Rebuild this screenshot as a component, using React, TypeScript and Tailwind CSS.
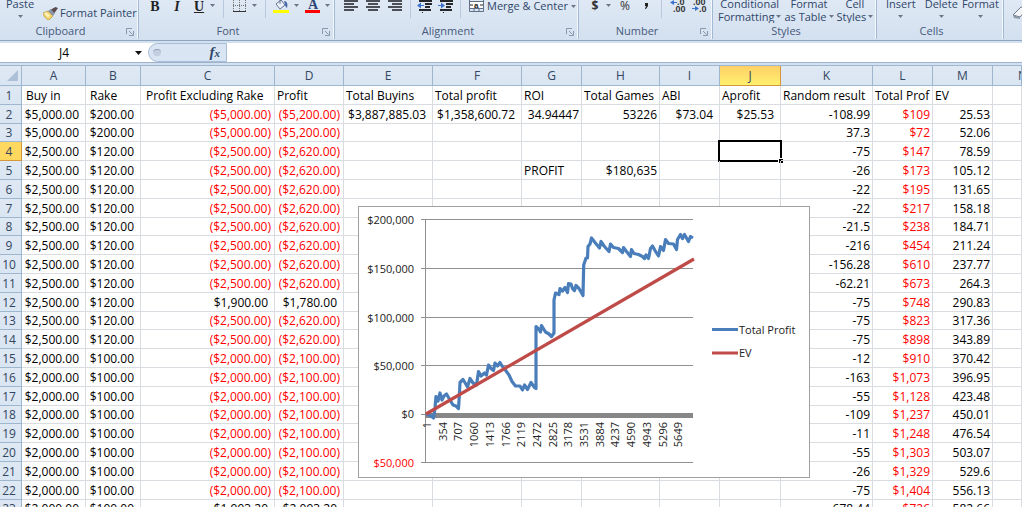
import React from "react";

type Col = { id: string; width: string; pad: string };

const COLS: Col[] = [
  { id: "A", width: "w-[64px]", pad: "pl-[4px]" },
  { id: "B", width: "w-[55px]", pad: "pl-[4px]" },
  { id: "C", width: "w-[134px]", pad: "pl-[5px]" },
  { id: "D", width: "w-[69px]", pad: "pl-[2px]" },
  { id: "E", width: "w-[89px]", pad: "pl-[2px]" },
  { id: "F", width: "w-[89px]", pad: "pl-[2px]" },
  { id: "G", width: "w-[60px]", pad: "pl-[2px]" },
  { id: "H", width: "w-[78px]", pad: "pl-[2px]" },
  { id: "I", width: "w-[60px]", pad: "pl-[2px]" },
  { id: "J", width: "w-[61px]", pad: "pl-[2px]" },
  { id: "K", width: "w-[92px]", pad: "pl-[2px]" },
  { id: "L", width: "w-[60px]", pad: "pl-[2px]" },
  { id: "M", width: "w-[60px]", pad: "pl-[2px]" },
];

const E = "";
const ROWS: string[][] = [
  ["Buy in", "Rake", "Profit Excluding Rake", "Profit", "Total Buyins", "Total profit", "ROI", "Total Games", "ABI", "Aprofit", "Random result", "Total Prof", "EV"],
  ["$5,000.00", "$200.00", "($5,000.00)", "($5,200.00)", "$3,887,885.03", "$1,358,600.72", "34.94447", "53226", "$73.04", "$25.53", "-108.99", "$109", "25.53"],
  ["$5,000.00", "$200.00", "($5,000.00)", "($5,200.00)", E, E, E, E, E, E, "37.3", "$72", "52.06"],
  ["$2,500.00", "$120.00", "($2,500.00)", "($2,620.00)", E, E, E, E, E, E, "-75", "$147", "78.59"],
  ["$2,500.00", "$120.00", "($2,500.00)", "($2,620.00)", E, E, "PROFIT", "$180,635", E, E, "-26", "$173", "105.12"],
  ["$2,500.00", "$120.00", "($2,500.00)", "($2,620.00)", E, E, E, E, E, E, "-22", "$195", "131.65"],
  ["$2,500.00", "$120.00", "($2,500.00)", "($2,620.00)", E, E, E, E, E, E, "-22", "$217", "158.18"],
  ["$2,500.00", "$120.00", "($2,500.00)", "($2,620.00)", E, E, E, E, E, E, "-21.5", "$238", "184.71"],
  ["$2,500.00", "$120.00", "($2,500.00)", "($2,620.00)", E, E, E, E, E, E, "-216", "$454", "211.24"],
  ["$2,500.00", "$120.00", "($2,500.00)", "($2,620.00)", E, E, E, E, E, E, "-156.28", "$610", "237.77"],
  ["$2,500.00", "$120.00", "($2,500.00)", "($2,620.00)", E, E, E, E, E, E, "-62.21", "$673", "264.3"],
  ["$2,500.00", "$120.00", "$1,900.00", "$1,780.00", E, E, E, E, E, E, "-75", "$748", "290.83"],
  ["$2,500.00", "$120.00", "($2,500.00)", "($2,620.00)", E, E, E, E, E, E, "-75", "$823", "317.36"],
  ["$2,500.00", "$120.00", "($2,500.00)", "($2,620.00)", E, E, E, E, E, E, "-75", "$898", "343.89"],
  ["$2,000.00", "$100.00", "($2,000.00)", "($2,100.00)", E, E, E, E, E, E, "-12", "$910", "370.42"],
  ["$2,000.00", "$100.00", "($2,000.00)", "($2,100.00)", E, E, E, E, E, E, "-163", "$1,073", "396.95"],
  ["$2,000.00", "$100.00", "($2,000.00)", "($2,100.00)", E, E, E, E, E, E, "-55", "$1,128", "423.48"],
  ["$2,000.00", "$100.00", "($2,000.00)", "($2,100.00)", E, E, E, E, E, E, "-109", "$1,237", "450.01"],
  ["$2,000.00", "$100.00", "($2,000.00)", "($2,100.00)", E, E, E, E, E, E, "-11", "$1,248", "476.54"],
  ["$2,000.00", "$100.00", "($2,000.00)", "($2,100.00)", E, E, E, E, E, E, "-55", "$1,303", "503.07"],
  ["$2,000.00", "$100.00", "($2,000.00)", "($2,100.00)", E, E, E, E, E, E, "-26", "$1,329", "529.6"],
  ["$2,000.00", "$100.00", "($2,000.00)", "($2,100.00)", E, E, E, E, E, E, "-75", "$1,404", "556.13"],
  ["$2,000.00", "$100.00", "$1,993.20", "$2,093.20", E, E, E, E, E, E, "678.44", "$726", "582.66"],
];

function cellClass(text: string, row: number, col: number): string {
  if (row === 0 || text === "PROFIT") return `${COLS[col].pad} text-left text-black`;
  const negative = text.startsWith("(");
  const red = negative || col === 11;
  const wide = text.includes(".") && text.startsWith("$");
  const pad = wide ? "pr-[6px]" : negative ? "pr-[3px]" : "pr-[2px]";
  return `text-right ${pad} ${red ? "text-[#ff0000]" : "text-black"}`;
}

function Caret() {
  return (
    <svg width="5" height="3" viewBox="0 0 5 3" className="shrink-0" aria-hidden="true">
      <path d="M0 0h5L2.5 3z" fill="#6b7788" />
    </svg>
  );
}

function Launcher({ label }: { label: string }) {
  return (
    <button type="button" aria-label={label} className="absolute right-[4px] bottom-[3px]">
      <svg width="8" height="8" viewBox="0 0 8 8" fill="none" stroke="#8b98ab" aria-hidden="true">
        <path d="M.5 6V.5H6" />
        <path d="M3 3l3.500 3.500M7.500 3v4.500H3" />
      </svg>
    </button>
  );
}

function Group({ label, width, launcher, children }: { label: string; width: string; launcher?: boolean; children: React.ReactNode }) {
  return (
    <section
      aria-label={label}
      className={`${width} relative flex h-[39px] shrink-0 flex-col border-r border-[#a3b8d3] shadow-[inset_-1px_0_0_#f3f8fd]`}
    >
      <div className="flex h-[23px] items-end overflow-hidden">{children}</div>
      <div className="h-[16px] pr-[17px] text-center leading-[16px] text-[#46597a]">{label}</div>
      {launcher && <Launcher label={`${label} settings`} />}
    </section>
  );
}

function StackButton({ top, bottom, className }: { top: string; bottom?: string; className: string }) {
  return (
    <button type="button" className={`${className} flex shrink-0 flex-col items-center leading-[12px] text-[#2f4668]`}>
      <span>{top}</span>
      <span className="flex h-[13px] items-center gap-[2px] whitespace-nowrap">
        {bottom}
        <Caret />
      </span>
    </button>
  );
}

function Divider() {
  return <span className="block h-[18px] w-px bg-[#b9c9dd]" />;
}

function AlignIcon({ rows }: { rows: [number, number][] }) {
  return (
    <svg width="14" height="12" viewBox="0 0 14 12" aria-hidden="true">
      {rows.map(([x, w], i) => (
        <rect key={i} x={x} y={i * 3} width={w} height="2" fill="#4c4f55" />
      ))}
    </svg>
  );
}

function IndentIcon({ flip }: { flip?: boolean }) {
  return (
    <svg width="16" height="13" viewBox="0 0 16 13" aria-hidden="true">
      <path d="M2 1h13M8 4h7M8 7h5M2 10h12" stroke="#26282c" strokeWidth="2" />
      <path d="M5.500 12v1" stroke="#26282c" strokeWidth="1" />
      <path d={flip ? "M0 5h3V2.500L7 5.500 3 8.500V6H0z" : "M7 5H4V2.500L0 5.500 4 8.500V6h3z"} fill="#3d73c9" />
    </svg>
  );
}

function DecimalIcon({ more }: { more?: boolean }) {
  return (
    <svg width="16" height="13" viewBox="0 0 16 13" aria-hidden="true" fontFamily="Liberation Sans, sans-serif" fontSize="9" fontWeight="700" fill="#333">
      <text x={more ? "7" : "2"} y="5">{more ? ".0" : ".00"}</text>
      <text x={more ? "3" : "8"} y="12">{more ? ".00" : ".0"}</text>
      <path d={more ? "M7 2H4V0L0 2.500 4 5V3h3z" : "M1 8h3V6l4 2.500L4 11V9H1z"} fill="#3d73c9" />
    </svg>
  );
}

function Ribbon() {
  return (
    <header className="flex h-[41px] overflow-hidden border-b border-[#8ea5c2] bg-gradient-to-b from-[#dfe9f5] to-[#d3e0ef] text-[11px]">
      <Group label="Clipboard" width="w-[139px]" launcher>
        <StackButton top="Paste" className="ml-[6px]" />
        <button type="button" className="mb-[3px] ml-[9px] flex items-center gap-[2px] leading-[14px] whitespace-nowrap text-[#2f4668]">
          <svg width="15" height="13" viewBox="0 0 15 13" aria-hidden="true">
            <path d="M0 6l5-2 5 5-4 4c-2 0-5-3-6-7z" fill="#f2d36b" stroke="#b8923a" strokeWidth=".7" />
            <path d="M1 6.500l4 4 2-2-4-3.500z" fill="#fff3b8" />
            <path d="M5 4l3-2 4 4-2 3z" fill="#8894a8" />
            <path d="M8 2.500L12.500 0 15 1l-3.500 5z" fill="#5b4a4a" />
          </svg>
          Format Painter
        </button>
      </Group>
      <Group label="Font" width="w-[196px]" launcher>
        <div className="flex h-[23px] items-start pl-[10px] font-['Liberation_Serif',serif] text-[14px] font-bold leading-[13px] text-[#222]">
          <button type="button" className="w-[12px]">B</button>
          <button type="button" className="ml-[10px] w-[12px] italic">I</button>
          <button type="button" className="ml-[10px] w-[12px] underline">U</button>
          <span className="mt-[4px] ml-[5px] flex"><Caret /></span>
          <span className="ml-[8px]"><Divider /></span>
          <button type="button" aria-label="Borders" className="ml-[9px] flex">
            <svg width="13" height="12" viewBox="0 0 13 12" aria-hidden="true">
              <path d="M.5 0v11M12.500 0v11M6.500 0v11M0 5.500h13" stroke="#777" strokeDasharray="1 1" />
              <path d="M0 11.500h13" stroke="#333" />
            </svg>
          </button>
          <span className="mt-[4px] ml-[6px] flex"><Caret /></span>
          <span className="ml-[8px]"><Divider /></span>
          <button type="button" aria-label="Fill color" className="ml-[7px] flex">
            <svg width="17" height="13" viewBox="0 0 17 13" aria-hidden="true">
              <path d="M3 4l5-4 4 5-5 4z" fill="#eef3fa" stroke="#5f7391" />
              <path d="M7 0v4" stroke="#5f7391" />
              <path d="M11 1c3 0 4 3 3 7-1-1-2-2-2-4z" fill="#4168a6" />
              <path d="M0 10h16v3H0z" fill="#ff0" />
            </svg>
          </button>
          <span className="mt-[4px] ml-[4px] flex"><Caret /></span>
          <button type="button" aria-label="Font color" className="ml-[6px] flex">
            <svg width="16" height="13" viewBox="0 0 16 13" aria-hidden="true">
              <text x="3" y="9" fontFamily="Liberation Serif, serif" fontSize="14" fontWeight="700" fill="#2c4674">A</text>
              <path d="M0 10h15v3H0z" fill="#f00" />
            </svg>
          </button>
          <span className="mt-[4px] ml-[4px] flex"><Caret /></span>
        </div>
      </Group>
      <Group label="Alignment" width="w-[244px]" launcher>
        <div className="flex h-[23px] items-start pl-[9px]">
          <button type="button" aria-label="Align left"><AlignIcon rows={[[0, 14], [0, 10], [0, 14], [0, 10]]} /></button>
          <button type="button" aria-label="Center" className="ml-[8px]"><AlignIcon rows={[[0, 14], [2, 10], [0, 14], [2, 10]]} /></button>
          <button type="button" aria-label="Align right" className="ml-[8px]"><AlignIcon rows={[[0, 14], [4, 10], [0, 14], [4, 10]]} /></button>
          <span className="ml-[8px]"><Divider /></span>
          <button type="button" aria-label="Decrease indent" className="ml-[6px]"><IndentIcon /></button>
          <button type="button" aria-label="Increase indent" className="ml-[5px]"><IndentIcon flip /></button>
          <span className="ml-[6px]"><Divider /></span>
          <button type="button" className="ml-[8px] flex items-center gap-[3px] leading-[12px] whitespace-nowrap text-[#2f4668]">
            <svg width="15" height="12" viewBox="0 0 15 12" aria-hidden="true">
              <path d="M.5 0v11.500h14V0M.5 8.500h14M5 8.500v3M10 8.500v3M.5 1.500h14" fill="none" stroke="#5f7088" />
              <path d="M1 2h13v6H1z" fill="#fff" />
              <path d="M1 5h3M11 5h3" stroke="#222" />
              <text x="5" y="8" fontFamily="Liberation Sans, sans-serif" fontSize="8" fontWeight="700" fill="#222">a</text>
            </svg>
            Merge &amp; Center
            <Caret />
          </button>
        </div>
      </Group>
      <Group label="Number" width="w-[134px]" launcher>
        <div className="flex h-[23px] items-start pl-[12px] font-bold leading-[12px] text-[#333]">
          <button type="button" className="w-[8px] text-[12px]">$</button>
          <span className="mt-[4px] ml-[7px] flex"><Caret /></span>
          <button type="button" className="ml-[8px] w-[12px] text-[12px] font-normal">%</button>
          <button type="button" aria-label="Comma style" className="ml-[13px] flex pt-[3px]">
            <svg width="5" height="7" viewBox="0 0 5 7" aria-hidden="true"><path d="M1 0h3v3L2 6H1l1-3H1z" fill="#222" /></svg>
          </button>
          <span className="ml-[12px]"><Divider /></span>
          <button type="button" aria-label="Increase decimal" className="ml-[8px]"><DecimalIcon more /></button>
          <button type="button" aria-label="Decrease decimal" className="ml-[5px]"><DecimalIcon /></button>
        </div>
      </Group>
      <Group label="Styles" width="w-[164px]">
        <StackButton top="Conditional" bottom="Formatting" className="ml-[5px]" />
        <StackButton top="Format" bottom="as Table" className="ml-[3px]" />
        <StackButton top="Cell" bottom="Styles" className="ml-[3px]" />
      </Group>
      <Group label="Cells" width="w-[127px]">
        <StackButton top="Insert" className="ml-[9px]" />
        <StackButton top="Delete" className="ml-[9px]" />
        <StackButton top="Format" className="ml-[4px]" />
      </Group>
      <div className="flex items-start pt-[6px] pl-[9px]">
        <button type="button" aria-label="Clear">
          <svg width="16" height="14" viewBox="0 0 16 14" aria-hidden="true">
            <path d="M0 9l8-8 7 1-8 9z" fill="#f5f6f8" stroke="#6f7a8a" />
            <path d="M0 9l7 2v2l-6-1z" fill="#8d98a8" />
          </svg>
        </button>
      </div>
    </header>
  );
}

function FormulaBar() {
  return (
    <div className="mt-[2px] flex h-[20px] border-b border-[#9fb3ce] bg-white text-[12px]">
      <input aria-label="Name box" defaultValue="J4" className="w-[128px] bg-white text-center text-black outline-none" />
      <button type="button" aria-label="Open name list" className="flex w-[20px] items-center justify-center">
        <svg width="7" height="4" viewBox="0 0 7 4" aria-hidden="true"><path d="M0 0h7L3.500 4z" fill="#111" /></svg>
      </button>
      <div className="flex w-[79px] items-center justify-between rounded-l-full border border-[#a9bdd6] bg-[#d9e5f3] pr-[6px] pl-[4px]">
        <span className="h-[7px] w-[8px] rounded-full border-t border-[#8fa0b8] bg-[#c3cfdf]" />
        <button type="button" className="font-['Liberation_Serif',serif] text-[15px] font-bold italic leading-[16px] text-[#2f4668]">
          f<span className="text-[11px]">x</span>
        </button>
      </div>
      <input aria-label="Formula" className="min-w-0 flex-1 bg-white px-1 outline-none" />
    </div>
  );
}

const LINE =
  "426,414 429,415 431,416 433.500,418 435,408 436,396.500 438,401 440,393 442,400 444,396 446.500,394 450,400 453,405 456,406 458.500,408.500 459.500,393 460,382.500 463,379.500 465.500,383.500 467.500,387 470,378.500 473,383 476.500,385 478.500,371.500 481,376 484.500,373 486.500,375 488.500,365 491,368.500 493.500,370.500 495,363 497.500,366 500,362.500 502,366 505,369.500 509,375 512,381.500 515.500,386 520,386 522.500,390 524.500,385 527.500,389.500 531,382.500 534.500,387.500 536,388.500 536,326.500 539,329.500 540.500,332 541.500,325.500 545.500,332 549,334 551.500,336.500 554,333 554,300 555.500,293 559,294.500 560,288.500 562.500,291 565,287.500 567.500,292.500 568.500,283.500 571,284 572.500,288.500 574.500,290.500 576,285.500 579,288.500 583,295.500 583.700,265 586,258 587.500,258 588,246.500 590,244 591.500,238 595,242.500 599.500,248 601,241.500 604,246 609,251.500 610.500,244 613.500,247.500 618.500,248.500 622.500,252.500 623.500,247.500 626.500,251.500 630.500,256.500 631.500,249.500 634,253.500 638.500,254.500 642.500,256.500 644.500,258.500 646,255 648.500,258.500 650.500,248.500 652.500,246 655,250.500 658.500,256 660.500,246.500 663.500,250.500 665.500,239.500 668.500,243.500 673.500,244 676.500,249.500 677.500,239.500 680.500,234.500 682.500,238.500 684.500,234.500 686.500,238 688.500,241.500 690.500,236.500 693,238";

const Y_TICKS: [string, number][] = [
  ["$200,000", 219.5],
  ["$150,000", 268.5],
  ["$100,000", 317.5],
  ["$50,000", 365.5],
  ["$0", 414],
  ["$50,000", 462.5],
];

const X_TICKS = ["1", "354", "707", "1060", "1413", "1766", "2119", "2472", "2825", "3178", "3531", "3884", "4237", "4590", "4943", "5296", "5649"];

function Chart() {
  return (
    <figure className="absolute top-[140px] left-[358px] border border-[#a0a0a0] bg-white">
      <svg width="450" height="270" viewBox="359 207 450 270" fontFamily="'Open Sans', sans-serif" fontSize="11" fill="#222" role="img" aria-label="Total Profit and EV">
        {Y_TICKS.map(([label, y], i) => (
          <g key={i}>
            {i !== 4 && <path d={`M421 ${y}H693`} stroke="#909090" />}
            <text x="414" y={y + 4} textAnchor="end" fill={i === 5 ? "#ff0000" : "#222"}>{label}</text>
          </g>
        ))}
        <path d="M425.500 219v244M421 414.500h4" stroke="#909090" />
        <path d="M425 415.500H693" stroke="#878787" strokeWidth="5" />
        <polyline points={LINE} fill="none" stroke="#4a7ebb" strokeWidth="3.200" strokeLinejoin="round" />
        <path d="M426 414L694 259" stroke="#be4b48" strokeWidth="3.200" />
        {X_TICKS.map((label, i) => (
          <text key={label} textAnchor="end" transform={`translate(${431 + i * 15.7} 422) rotate(-90)`}>{label}</text>
        ))}
        <path d="M712 329.500h26" stroke="#4a7ebb" strokeWidth="3" />
        <text x="739" y="334">Total Profit</text>
        <path d="M712 353h26" stroke="#be4b48" strokeWidth="3" />
        <text x="739" y="357">EV</text>
      </svg>
    </figure>
  );
}

const HEAD = "border-r border-b border-[#9eb6ce] bg-gradient-to-b from-[#dfe9f4] to-[#d9e5f2] font-normal text-[#33465f]";
const HEAD_ON = "border-r border-b border-[#d5963c] bg-gradient-to-b from-[#ffd067] to-[#fff06e] font-normal text-[#33465f]";
const HEAD_CUT = "border-r border-[#9eb6ce] bg-[#dce7f3] font-normal text-[#33465f]";
const ROW_ON = "border-r border-b border-[#d5963c] bg-[#ffd85f] font-normal text-[#33465f]";

function Sheet() {
  return (
    <main className="relative overflow-hidden">
      <table className="w-full table-fixed border-separate border-spacing-0 text-[12px] leading-[17px] whitespace-nowrap">
        <colgroup>
          <col className="w-[22px]" />
          {COLS.map((c) => (
            <col key={c.id} className={c.width} />
          ))}
          <col />
        </colgroup>
        <thead>
          <tr className="h-[20px]">
            <th className={HEAD} aria-label="Select all">
              <svg width="11" height="11" viewBox="0 0 11 11" className="ml-[7px]" aria-hidden="true"><path d="M11 0v11H0z" fill="#adc0d8" /></svg>
            </th>
            {COLS.map((c) => (
              <th key={c.id} scope="col" className={c.id === "J" ? HEAD_ON : HEAD}>{c.id}</th>
            ))}
            <th scope="col" className={`${HEAD} overflow-hidden pl-[25px] text-left`}>N</th>
          </tr>
        </thead>
        <tbody>
          {ROWS.map((cells, r) => {
            const cut = r === ROWS.length - 1;
            const height = cut ? "h-[7px]" : r % 5 === 2 ? "h-[18px]" : "h-[19px]";
            const inner = cut ? "block h-[7px] overflow-hidden" : "block";
            const line = cut ? "border-r" : "border-r border-b";
            return (
              <tr key={r} className={height}>
                <th scope="row" className={`${cut ? HEAD_CUT : r === 3 ? ROW_ON : HEAD} p-0 pr-[3px] text-center`}>
                  <span className={inner}>{r + 1}</span>
                </th>
                {cells.map((text, c) => (
                  <td key={c} className={`${line} relative border-[#d9dce1] p-0 ${cellClass(text, r, c)}`}>
                    <span className={inner}>{text}</span>
                    {r === 3 && c === 9 && (
                      <span className="absolute -top-[2px] -right-[2px] -bottom-[2px] -left-[2px] border-2 border-black">
                        <span className="absolute -right-[3px] -bottom-[3px] size-[5px] border-t border-l border-white bg-black" />
                      </span>
                    )}
                  </td>
                ))}
                <td className={`${line} border-[#d9dce1] p-0`} />
              </tr>
            );
          })}
        </tbody>
      </table>
      <Chart />
    </main>
  );
}

export default function App() {
  return (
    <div className="min-h-screen bg-white font-['Open_Sans','Noto_Sans',sans-serif]">
      <div className="bg-[#d3e0ef]">
        <Ribbon />
        <FormulaBar />
        <div className="h-[3px] border-b border-[#9eb6ce]" />
      </div>
      <Sheet />
    </div>
  );
}
